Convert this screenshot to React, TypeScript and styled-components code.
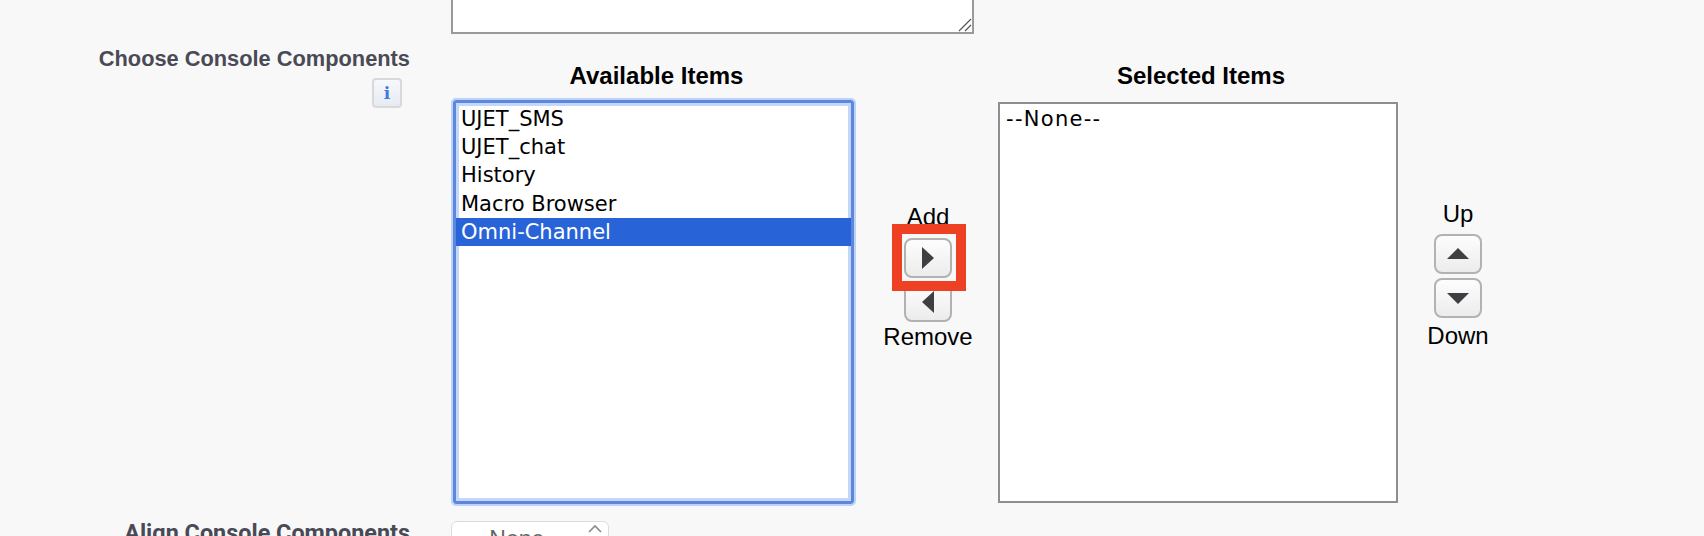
import styled, { createGlobalStyle } from "styled-components"

const GlobalStyle = createGlobalStyle`
    html, body {
        margin: 0;
        height: 536px;
        overflow: hidden;
        background: #f8f8f8;
    }
`

type Direction = "right" | "left" | "up" | "down"

const arrowPaths: Record<Direction, string> = {
    right: "M8 3 L20 14 L8 25 Z",
    left: "M20 3 L8 14 L20 25 Z",
    up: "M3 19 L14 8 L25 19 Z",
    down: "M3 9 L25 9 L14 20 Z",
}

const ArrowButton = ({ direction }: { direction: Direction }) => (
    <MoveButton>
        <svg width="28" height="28" viewBox="0 0 28 28">
            <path d={arrowPaths[direction]} fill="#3d3f42" />
        </svg>
    </MoveButton>
)

const available = ["UJET_SMS", "UJET_chat", "History", "Macro Browser"]

const App = () => {
    return <Page>
        <GlobalStyle />
        <TextareaRow>
            <TextareaStub>
                <svg width="16" height="16" viewBox="0 0 16 16">
                    <path d="M15 3 L3 15 M15 9 L9 15" stroke="#555" strokeWidth="1.2" fill="none" />
                </svg>
            </TextareaStub>
        </TextareaRow>
        <ChooserRow>
            <LabelCell>
                <FieldLabel>Choose Console Components</FieldLabel>
                <InfoButton>i</InfoButton>
            </LabelCell>
            <Duelling>
                <AvailableColumn>
                    <ColumnTitle>Available Items</ColumnTitle>
                    <FocusedList>
                        {available.map(item => <ListItem key={item}>{item}</ListItem>)}
                        <ListItem $selected>Omni-Channel</ListItem>
                    </FocusedList>
                </AvailableColumn>
                <MoverColumn>
                    <MoverLabel>Add</MoverLabel>
                    <ButtonStack>
                        <ArrowButton direction="right" />
                        <ArrowButton direction="left" />
                    </ButtonStack>
                    <MoverLabel>Remove</MoverLabel>
                    <Highlight />
                </MoverColumn>
                <SelectedColumn>
                    <ColumnTitle>Selected Items</ColumnTitle>
                    <PlainList>
                        <NoneItem>--None--</NoneItem>
                    </PlainList>
                </SelectedColumn>
                <OrderColumn>
                    <MoverLabel>Up</MoverLabel>
                    <OrderStack>
                        <ArrowButton direction="up" />
                        <ArrowButton direction="down" />
                    </OrderStack>
                    <MoverLabel>Down</MoverLabel>
                </OrderColumn>
            </Duelling>
        </ChooserRow>
        <AlignRow>
            <LabelCell>
                <AlignLabel>Align Console Components</AlignLabel>
            </LabelCell>
            <AlignSelect>
                --None--
                <svg width="16" height="10" viewBox="0 0 16 10">
                    <path d="M2 8 L8 2 L14 8" stroke="#8a8a8a" strokeWidth="1.6" fill="none" />
                </svg>
            </AlignSelect>
        </AlignRow>
    </Page>
}

const Page = styled.div`
    width: 1704px;
    height: 536px;
    overflow: hidden;
    font-family: "Liberation Sans", Arial, sans-serif;
    color: #000;
`

const TextareaRow = styled.div`
    height: 34px;
    padding-left: 451px;
`

const TextareaStub = styled.div`
    box-sizing: border-box;
    width: 523px;
    height: 34px;
    background: #fff;
    border: 2px solid #9a9a9a;
    border-top: none;
    display: flex;
    justify-content: flex-end;
    align-items: flex-end;
`

const ChooserRow = styled.div`
    display: grid;
    grid-template-columns: 410px 1fr;
    column-gap: 41px;
    height: 471px;
    padding-top: 12px;
    box-sizing: border-box;
`

const LabelCell = styled.div`
    display: flex;
    flex-direction: column;
    align-items: flex-end;
`

const FieldLabel = styled.div`
    font-size: 21.8px;
    font-weight: 700;
    line-height: 26px;
    color: #4a4a56;
`

const InfoButton = styled.div`
    box-sizing: border-box;
    width: 30px;
    height: 30px;
    margin-top: 6px;
    margin-right: 8px;
    border: 2px solid #d9d9d9;
    border-radius: 4px;
    background: linear-gradient(#f6f8fb, #e6ebf3);
    color: #3f7bd9;
    font-family: "DejaVu Serif", "Liberation Serif", serif;
    font-weight: 700;
    font-size: 17px;
    line-height: 26px;
    text-align: center;
`

const Duelling = styled.div`
    display: flex;
    align-items: flex-start;
`

const AvailableColumn = styled.div`
    width: 405px;
    display: flex;
    flex-direction: column;
    align-items: center;
`

const SelectedColumn = styled.div`
    width: 400px;
    display: flex;
    flex-direction: column;
    align-items: center;
`

const ColumnTitle = styled.div`
    font-size: 24px;
    font-weight: 700;
    line-height: 28px;
    padding-top: 16px;
    padding-left: 6px;
    margin-bottom: 8px;
`

const FocusedList = styled.div`
    box-sizing: border-box;
    width: 405px;
    height: 408px;
    background: #fff;
    border: 2px solid #bcd2f7;
    border-radius: 5px;
    box-shadow: inset 0 0 0 3px #5c87dd, inset 0 0 0 6px #c3d7f9;
    padding: 5px 3px 0;
    font-family: "DejaVu Sans", sans-serif;
`

const PlainList = styled.div`
    box-sizing: border-box;
    width: 400px;
    height: 401px;
    margin-top: 4px;
    background: #fff;
    border: 2px solid #8e8e8e;
    padding: 1px 1px 0;
    font-family: "DejaVu Sans", sans-serif;
`

const ListItem = styled.div<{ $selected?: boolean }>`
    height: 28.2px;
    line-height: 28px;
    padding-left: 5px;
    font-size: 21px;
    white-space: nowrap;
    background: ${p => p.$selected ? "#2864d8" : "transparent"};
    color: ${p => p.$selected ? "#fff" : "#000"};
`

const NoneItem = styled(ListItem)`
    letter-spacing: 1.3px;
`

const MoverColumn = styled.div`
    position: relative;
    width: 140px;
    padding-left: 2px;
    padding-top: 159px;
    display: flex;
    flex-direction: column;
    align-items: center;
`

const OrderColumn = styled.div`
    width: 120px;
    padding-top: 156px;
    display: flex;
    flex-direction: column;
    align-items: center;
`

const MoverLabel = styled.div`
    font-size: 24px;
    line-height: 24px;
`

const ButtonStack = styled.div`
    margin: 9px 0 3px;
    display: flex;
    flex-direction: column;
    gap: 4px;
`

const OrderStack = styled(ButtonStack)`
    margin: 8px 0 6px;
`

const MoveButton = styled.div`
    box-sizing: border-box;
    width: 48px;
    height: 40px;
    border: 2px solid #b2b2b2;
    border-radius: 8px;
    background: linear-gradient(#fdfdfd, #ececec);
    display: flex;
    align-items: center;
    justify-content: center;
`

const Highlight = styled.div`
    box-sizing: border-box;
    position: absolute;
    left: 36px;
    top: 178px;
    width: 74px;
    height: 67px;
    border: 10px solid #ee4023;
`

const AlignRow = styled.div`
    display: grid;
    grid-template-columns: 410px 1fr;
    column-gap: 41px;
    height: 31px;
    padding-top: 16px;
`

const AlignLabel = styled(FieldLabel)`
    font-family: Roboto, "Liberation Sans", sans-serif;
    font-size: 23.4px;
    margin-top: -1px;
`

const AlignSelect = styled.div`
    box-sizing: border-box;
    width: 158px;
    height: 40px;
    background: #fff;
    border: 1px solid #dcdcdc;
    border-radius: 6px;
    padding-left: 22px;
    font-size: 23px;
    line-height: 34px;
    color: #666;
    position: relative;

    svg {
        position: absolute;
        right: 5px;
        top: 2px;
    }
`

export default App
